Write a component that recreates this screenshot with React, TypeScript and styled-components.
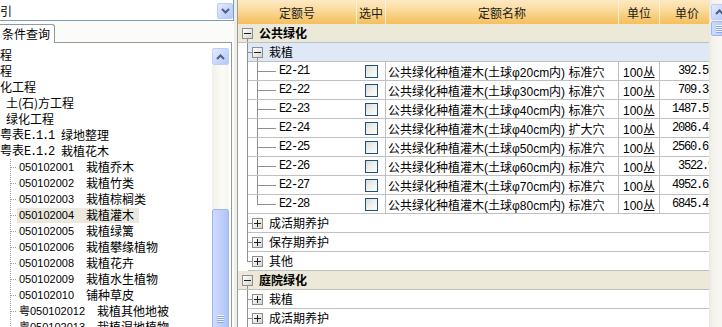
import React from 'react';
import styled, { createGlobalStyle } from 'styled-components';

const CJK = '"Noto Sans CJK SC", sans-serif';
const SANS = '"Liberation Sans", "Noto Sans CJK SC", sans-serif';
const MONO = '"Liberation Mono", "Noto Sans CJK SC", monospace';
const LINE = '#8f8f8f';
const DOT = '#a0a0a0';
const GRID = '#c0c0c0';

const GlobalStyle = createGlobalStyle`
  * { box-sizing: border-box; }
  html, body { margin: 0; padding: 0; background: #ffffff; }
  body { font-family: ${CJK}; font-size: 12px; color: #000; }
`;

const Window = styled.div`
  width: 722px;
  height: 327px;
  display: flex;
  overflow: hidden;
  background: #fff;
`;

/* ---------------- shared scrollbar parts ---------------- */
const ScrollButton = styled.div<{ $h: number }>`
  flex: none;
  width: 17px;
  height: ${(p) => p.$h}px;
  border: 1px solid #bccdf6;
  border-radius: 2px;
  background: linear-gradient(135deg, #e3ebfe 0%, #c8d7fc 55%, #b4c8f6 100%);
  display: flex;
  align-items: center;
  justify-content: center;
`;
const Thumb = styled.div<{ $h: number }>`
  flex: none;
  width: 17px;
  height: ${(p) => p.$h}px;
  border: 1px solid #9fb7ee;
  border-radius: 2px;
  background: linear-gradient(90deg, #cddbfd 0%, #bfd0fb 50%, #afc4f6 100%);
  display: flex;
  align-items: center;
  justify-content: center;
`;
const Grip = styled.span`
  width: 7px;
  height: 8px;
  background: repeating-linear-gradient(to bottom, #eef3fe 0 1px, #8da8e2 1px 2px);
`;
const Chevron = ({ up }: { up?: boolean }) => (
  <svg width="9" height="6" viewBox="0 0 9 6">
    <path
      d={up ? 'M1 5 L4.5 1.5 L8 5' : 'M1 1 L4.5 4.5 L8 1'}
      fill="none"
      stroke="#4d6185"
      strokeWidth="2"
    />
  </svg>
);

/* ---------------- left panel ---------------- */
const LeftPanel = styled.div`
  width: 234px;
  flex: none;
  display: flex;
  flex-direction: column;
  background: #fbfbf9;
`;
const Combo = styled.div`
  flex: none;
  height: 21px;
  padding-top: 1px;
  display: flex;
  align-items: center;
  justify-content: space-between;
  background: #fff;
  border-right: 1px solid #7f9db9;
  border-bottom: 1px solid #7f9db9;
  font-family: ${CJK};
  font-size: 12px;
  line-height: 16px;
`;
const DropButton = styled.div`
  width: 16px;
  height: 16px;
  border: 1px solid #bccdf6;
  border-radius: 2px;
  background: linear-gradient(135deg, #e3ebfe 0%, #c8d7fc 55%, #b4c8f6 100%);
  display: flex;
  align-items: center;
  justify-content: center;
`;
const LeftBody = styled.div`
  flex: 1;
  min-height: 0;
  display: flex;
  flex-direction: column;
  padding-right: 2px;
`;
const TabStrip = styled.div`
  flex: none;
  height: 22px;
  display: flex;
  align-items: flex-end;
`;
const Tab = styled.div`
  height: 19px;
  padding: 0 4px 0 2px;
  background: #fff;
  border-top: 1px solid #919b9c;
  border-right: 1px solid #919b9c;
  border-top-right-radius: 3px;
  font-family: ${CJK};
  font-size: 12px;
  line-height: 17px;
`;
const TabFill = styled.div`
  flex: 1;
  align-self: stretch;
  border-bottom: 1px solid #919b9c;
`;
const TreeBox = styled.div`
  flex: 1;
  min-height: 0;
  display: flex;
  background: #fff;
  border-right: 1px solid #919b9c;
  padding-top: 4px;
  overflow: hidden;
`;
const TreeList = styled.div`
  flex: 1;
  min-width: 0;
  display: flex;
  flex-direction: column;
  overflow: hidden;
`;
const TreeRow = styled.div<{ $indent?: number }>`
  flex: none;
  height: 16px;
  display: flex;
  align-items: center;
  white-space: nowrap;
  padding-left: ${(p) => p.$indent ?? 0}px;
  font-family: ${CJK};
  font-size: 12px;
  line-height: 16px;
`;
const Dots = styled.span`
  flex: none;
  width: 17px;
  align-self: stretch;
  background:
    repeating-linear-gradient(to bottom, ${DOT} 0 1px, transparent 1px 2px) 10px 0 / 1px 100% no-repeat,
    repeating-linear-gradient(to right, ${DOT} 0 1px, transparent 1px 2px) 11px 8px / 6px 1px no-repeat;
`;
const Item = styled.span<{ $selected?: boolean }>`
  display: flex;
  align-items: center;
  gap: 12px;
  height: 15px;
  padding: 0 5px 0 2px;
  background: ${(p) => (p.$selected ? '#ebe9de' : 'transparent')};
`;
const ItemCode = styled.span`
  font-family: ${SANS};
  font-size: 11px;
`;
const ItemName = styled.span`
  font-family: ${CJK};
  font-size: 12px;
`;
const Chapter = styled.span`
  display: flex;
  align-items: center;
  gap: 7px;
`;
const Mono = styled.span`
  font-family: ${MONO};
  font-size: 12px;
  letter-spacing: -1.2px;
`;
const TreeScroll = styled.div`
  flex: none;
  width: 17px;
  margin: 1px 2px 0 0;
  display: flex;
  flex-direction: column;
  overflow: hidden;
`;
const Track = styled.div<{ $h: number }>`
  flex: none;
  height: ${(p) => p.$h}px;
  background: linear-gradient(90deg, #f2f0ea 0%, #fbfbf7 60%, #f6f5f0 100%);
`;

/* ---------------- splitter & right panel ---------------- */
const Splitter = styled.div`
  width: 3px;
  flex: none;
  background: #efeee8;
`;
const RightPanel = styled.div`
  flex: 1;
  min-width: 0;
  display: flex;
  border-left: 1px solid #9c9c9c;
  background: #fff;
`;
const Grid = styled.div`
  flex: 1;
  min-width: 0;
  overflow: hidden;
`;
const GridTable = styled.div`
  width: 476px;
  display: flex;
  flex-direction: column;
`;
const HeaderRow = styled.div`
  display: flex;
  height: 24px;
  background: linear-gradient(to bottom, #fde9c3 0%, #fbdc9f 40%, #f8cb78 72%, #f5bf5e 100%);
`;
const HeaderCell = styled.div<{ $w: number; $last?: boolean }>`
  flex: none;
  width: ${(p) => p.$w}px;
  display: flex;
  align-items: center;
  justify-content: center;
  border-right: ${(p) => (p.$last ? 'none' : '1px solid #fdf1da')};
  font-family: ${CJK};
  font-size: 12px;
  color: #1c1c1c;
`;
const Row = styled.div`
  flex: none;
  display: flex;
  height: 19px;
`;
type GuideKind = 'pipe' | 'tee' | 'elbow';
const guideBg = (kind: GuideKind, x: number) => {
  const c = `linear-gradient(${LINE}, ${LINE})`;
  const vert = kind === 'elbow' ? `${c} ${x}px 0 / 1px 10px no-repeat` : `${c} ${x}px 0 / 1px 100% no-repeat`;
  const hor = kind === 'pipe' ? '' : `, ${c} ${x}px 9px / calc(100% - ${x}px) 1px no-repeat`;
  return vert + hor;
};
const Guide = styled.span<{ $w: number; $x: number; $kind: GuideKind }>`
  flex: none;
  width: ${(p) => p.$w}px;
  align-self: stretch;
  background: ${(p) => guideBg(p.$kind, p.$x)};
`;
const Stub = styled.span`
  flex: none;
  width: 4px;
  height: 1px;
  background: ${LINE};
`;
const RowBody = styled.div<{ $bg?: string }>`
  flex: 1;
  display: flex;
  align-items: center;
  height: 19px;
  border-bottom: 1px solid ${GRID};
  background: ${(p) => p.$bg ?? '#fff'};
`;
const GroupBody = styled(RowBody)`
  padding-left: 4px;
`;
const ExpanderSlot = styled.span<{ $lineBelow?: boolean }>`
  flex: none;
  width: 11px;
  align-self: stretch;
  display: flex;
  align-items: center;
  background: ${(p) =>
    p.$lineBelow ? `linear-gradient(${LINE}, ${LINE}) 5px 100% / 1px 50% no-repeat` : 'none'};
`;
const Expander = styled.span<{ $open?: boolean }>`
  width: 11px;
  height: 11px;
  border: 1px solid #8e8e8e;
  background:
    linear-gradient(#1e1e1e, #1e1e1e) center / 7px 1px no-repeat,
    ${(p) => (p.$open ? '' : 'linear-gradient(#1e1e1e, #1e1e1e) center / 1px 7px no-repeat,')}
    linear-gradient(135deg, #ffffff 0%, #e6e6e3 60%, #d4d4d0 100%);
`;
const GroupLabel = styled.span`
  margin-left: 6px;
  font-family: ${CJK};
  font-size: 12px;
  font-weight: 700;
  line-height: 18px;
`;
const SubLabel = styled.span`
  margin-left: 6px;
  font-family: ${CJK};
  font-size: 12px;
  line-height: 18px;
`;
const Cell = styled.div<{ $w: number; $sep?: boolean; $align?: 'left' | 'right' | 'center'; $pad?: number }>`
  flex: none;
  width: ${(p) => p.$w}px;
  align-self: stretch;
  display: flex;
  align-items: center;
  justify-content: ${(p) => (p.$align === 'right' ? 'flex-end' : p.$align === 'center' ? 'center' : 'flex-start')};
  padding-left: ${(p) => p.$pad ?? 0}px;
  border-right: ${(p) => (p.$sep ? `1px solid ${GRID}` : 'none')};
  white-space: nowrap;
  overflow: hidden;
`;
const CodeText = styled.span`
  margin-left: 3px;
  font-family: ${MONO};
  font-size: 12px;
  letter-spacing: -1.2px;
`;
const CheckBox = styled.span`
  width: 13px;
  height: 13px;
  border: 1px solid #1c5180;
  background: linear-gradient(135deg, #dcdcd6 0%, #efefea 45%, #fdfdfb 100%);
`;
const NameText = styled.span`
  font-family: ${SANS};
  font-size: 12px;
`;
const PriceText = styled.span`
  font-family: ${MONO};
  font-size: 12px;
  letter-spacing: -1.2px;
`;
const VScroll = styled.div`
  flex: none;
  width: 13px;
  padding: 4px 0 0 2px;
  display: flex;
  flex-direction: column;
  gap: 1px;
  overflow: hidden;
  background: linear-gradient(90deg, #e9e7df 0%, #f4f3ee 30%, #f7f6f2 100%);
`;

/* ---------------- data ---------------- */
type LeftItem =
  | { kind: 'plain'; text: string; indent: number }
  | { kind: 'chapter'; prefix: string; code: string; name: string }
  | { kind: 'leaf'; code: string; name: string; selected?: boolean };

const leftItems: LeftItem[] = [
  { kind: 'plain', text: '程', indent: 0 },
  { kind: 'plain', text: '程', indent: 0 },
  { kind: 'plain', text: '化工程', indent: 0 },
  { kind: 'plain', text: '土(石)方工程', indent: 6 },
  { kind: 'plain', text: '绿化工程', indent: 6 },
  { kind: 'chapter', prefix: '粤表', code: 'E.1.1', name: '绿地整理' },
  { kind: 'chapter', prefix: '粤表', code: 'E.1.2', name: '栽植花木' },
  { kind: 'leaf', code: '050102001', name: '栽植乔木' },
  { kind: 'leaf', code: '050102002', name: '栽植竹类' },
  { kind: 'leaf', code: '050102003', name: '栽植棕榈类' },
  { kind: 'leaf', code: '050102004', name: '栽植灌木', selected: true },
  { kind: 'leaf', code: '050102005', name: '栽植绿篱' },
  { kind: 'leaf', code: '050102006', name: '栽植攀缘植物' },
  { kind: 'leaf', code: '050102008', name: '栽植花卉' },
  { kind: 'leaf', code: '050102009', name: '栽植水生植物' },
  { kind: 'leaf', code: '050102010', name: '铺种草皮' },
  { kind: 'leaf', code: '粤050102012', name: '栽植其他地被' },
  { kind: 'leaf', code: '粤050102013', name: '栽植湿地植物' },
];

const quotas = [
  { code: 'E2-21', size: '20', hole: '标准穴', price: '392.59' },
  { code: 'E2-22', size: '30', hole: '标准穴', price: '709.34' },
  { code: 'E2-23', size: '40', hole: '标准穴', price: '1487.59' },
  { code: 'E2-24', size: '40', hole: '扩大穴', price: '2086.41' },
  { code: 'E2-25', size: '50', hole: '标准穴', price: '2560.61' },
  { code: 'E2-26', size: '60', hole: '标准穴', price: '3522.9' },
  { code: 'E2-27', size: '70', hole: '标准穴', price: '4952.62' },
  { code: 'E2-28', size: '80', hole: '标准穴', price: '6845.41' },
];

const columns = [
  { title: '定额号', w: 119 },
  { title: '选中', w: 29 },
  { title: '定额名称', w: 233 },
  { title: '单位', w: 41 },
  { title: '单价', w: 54 },
];

/* ---------------- row components ---------------- */
const GroupRow = ({ label }: { label: string }) => (
  <Row>
    <GroupBody $bg="#ece9d8">
      <ExpanderSlot $lineBelow>
        <Expander $open />
      </ExpanderSlot>
      <GroupLabel>{label}</GroupLabel>
    </GroupBody>
  </Row>
);

const SubRow = ({ label, kind, open }: { label: string; kind: GuideKind; open?: boolean }) => (
  <Row>
    <Guide $w={10} $x={9} $kind={kind} />
    <RowBody $bg={open ? '#dfe8f6' : '#fff'}>
      <Stub />
      <ExpanderSlot $lineBelow={open}>
        <Expander $open={open} />
      </ExpanderSlot>
      <SubLabel>{label}</SubLabel>
    </RowBody>
  </Row>
);

const QuotaRow = ({ q, last }: { q: (typeof quotas)[number]; last: boolean }) => (
  <Row>
    <Guide $w={10} $x={9} $kind="pipe" />
    <RowBody>
      <Cell $w={109}>
        <Guide $w={28} $x={9} $kind={last ? 'elbow' : 'tee'} />
        <CodeText>{q.code}</CodeText>
      </Cell>
      <Cell $w={29} $sep $pad={8}>
        <CheckBox />
      </Cell>
      <Cell $w={233} $sep $pad={2}>
        <NameText>{`公共绿化种植灌木(土球φ${q.size}cm内) ${q.hole}`}</NameText>
      </Cell>
      <Cell $w={41} $sep $pad={4}>
        <NameText>100丛</NameText>
      </Cell>
      <Cell $w={54} $align="right">
        <PriceText>{q.price}</PriceText>
      </Cell>
    </RowBody>
  </Row>
);

export default function App() {
  return (
    <>
      <GlobalStyle />
      <Window>
        <LeftPanel>
          <Combo>
            <span>引</span>
            <DropButton>
              <Chevron />
            </DropButton>
          </Combo>
          <LeftBody>
            <TabStrip>
              <Tab>条件查询</Tab>
              <TabFill />
            </TabStrip>
            <TreeBox>
              <TreeList>
                {leftItems.map((it, i) => {
                  if (it.kind === 'plain') {
                    return (
                      <TreeRow key={i} $indent={it.indent}>
                        {it.text}
                      </TreeRow>
                    );
                  }
                  if (it.kind === 'chapter') {
                    return (
                      <TreeRow key={i}>
                        <Chapter>
                          <span>
                            {it.prefix}
                            <Mono>{it.code}</Mono>
                          </span>
                          <ItemName>{it.name}</ItemName>
                        </Chapter>
                      </TreeRow>
                    );
                  }
                  return (
                    <TreeRow key={i}>
                      <Dots />
                      <Item $selected={it.selected}>
                        <ItemCode>{it.code}</ItemCode>
                        <ItemName>{it.name}</ItemName>
                      </Item>
                    </TreeRow>
                  );
                })}
              </TreeList>
              <TreeScroll>
                <ScrollButton $h={17}>
                  <Chevron up />
                </ScrollButton>
                <Track $h={144} />
                <Thumb $h={220}>
                  <Grip />
                </Thumb>
              </TreeScroll>
            </TreeBox>
          </LeftBody>
        </LeftPanel>
        <Splitter />
        <RightPanel>
          <Grid>
            <GridTable>
              <HeaderRow>
                {columns.map((c, i) => (
                  <HeaderCell key={c.title} $w={c.w} $last={i === columns.length - 1}>
                    {c.title}
                  </HeaderCell>
                ))}
              </HeaderRow>
              <GroupRow label="公共绿化" />
              <SubRow label="栽植" kind="tee" open />
              {quotas.map((q, i) => (
                <QuotaRow key={q.code} q={q} last={i === quotas.length - 1} />
              ))}
              <SubRow label="成活期养护" kind="tee" />
              <SubRow label="保存期养护" kind="tee" />
              <SubRow label="其他" kind="elbow" />
              <GroupRow label="庭院绿化" />
              <SubRow label="栽植" kind="tee" />
              <SubRow label="成活期养护" kind="tee" />
            </GridTable>
          </Grid>
          <VScroll>
            <ScrollButton $h={16}>
              <Chevron up />
            </ScrollButton>
            <Thumb $h={15}>
              <Grip />
            </Thumb>
          </VScroll>
        </RightPanel>
      </Window>
    </>
  );
}
